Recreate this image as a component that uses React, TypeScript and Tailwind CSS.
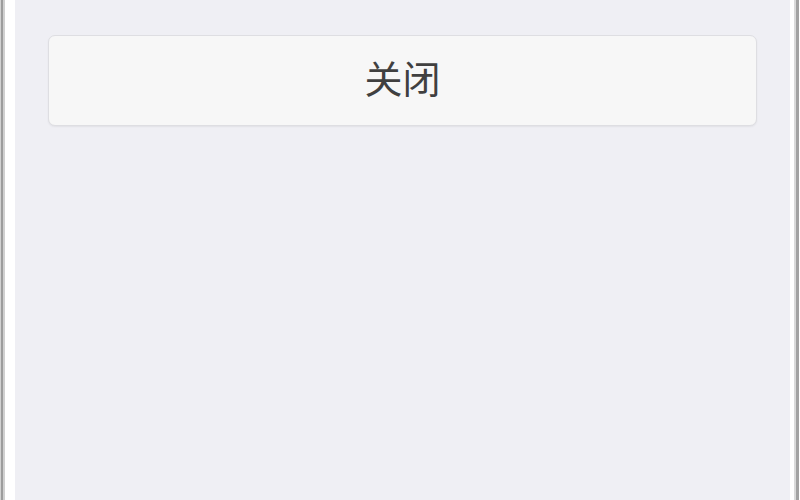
import React from "react";

const App = () => {
  return (
    <div className="w-[800px] h-[500px] flex bg-[#efeff4] overflow-hidden font-['Noto_Sans_CJK_SC',sans-serif]">
      <div className="w-px h-full bg-[#d2d2d2]" />
      <div className="w-[2px] h-full bg-[#9c9c9c]" />
      <div className="w-[2px] h-full bg-[#d0d0d0]" />
      <div className="w-[10px] h-full bg-white" />
      <div className="flex-1 h-full px-[33px] pt-[35px]">
        <button className="w-full h-[91px] flex items-center justify-center pb-[8px] rounded-[7px] bg-[#f7f7f7] border border-[#dedee2] shadow-[0_1px_2px_rgba(0,0,0,0.06)] text-[38px] text-[#404040] leading-none">
          关闭
        </button>
      </div>
      <div className="w-[4px] h-full bg-white" />
      <div className="w-[2px] h-full bg-[#dadada]" />
      <div className="w-[3px] h-full bg-[#a2a2a2]" />
      <div className="w-px h-full bg-white" />
    </div>
  );
};

export default App;
